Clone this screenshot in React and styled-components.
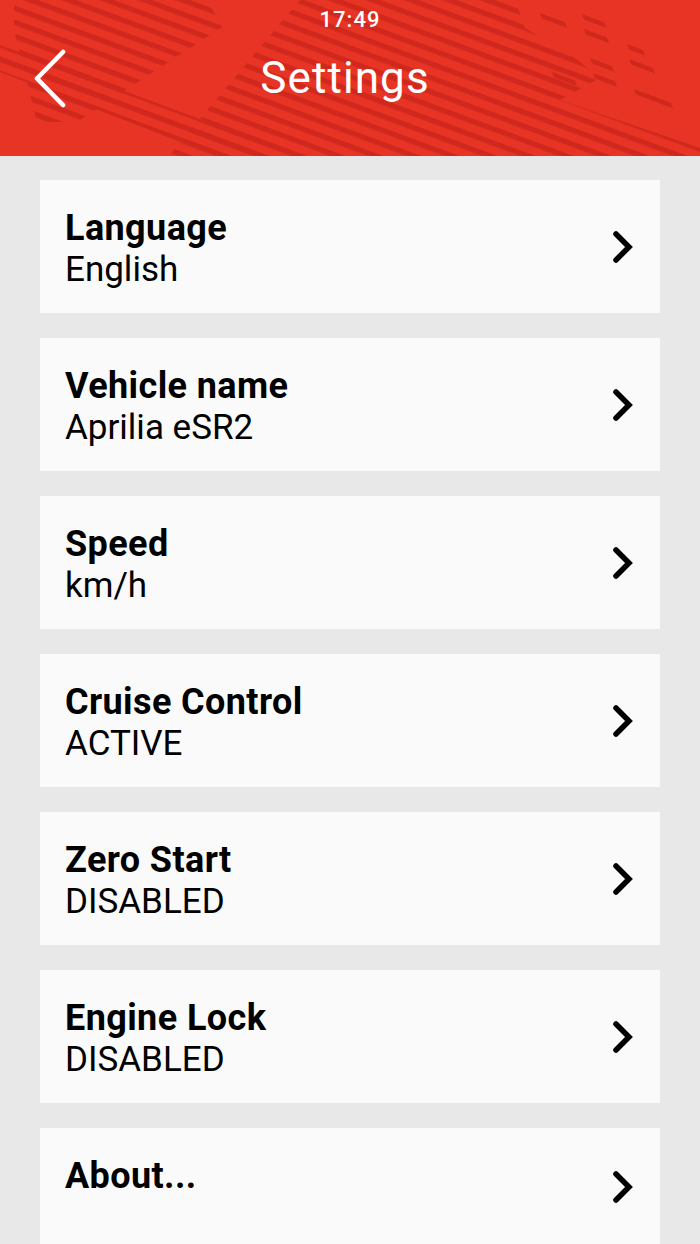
import React from "react";
import styled, { createGlobalStyle } from "styled-components";

const GlobalStyle = createGlobalStyle`
  html, body { margin: 0; padding: 0; background: #e8e8e8; }
  body { font-family: Roboto, "Noto Sans", "Liberation Sans", sans-serif; }
  * { box-sizing: border-box; }
`;

const Page = styled.div`
  width: 700px;
  min-height: 1244px;
  background: #e8e8e8;
  display: flex;
  flex-direction: column;
`;

const Header = styled.header`
  position: relative;
  height: 156px;
  background: #e83424;
  overflow: hidden;
  display: flex;
  flex-direction: column;
`;

const Stripes = styled.svg`
  position: absolute;
  inset: 0;
  width: 700px;
  height: 156px;
  pointer-events: none;
`;

const StatusBar = styled.div`
  position: relative;
  height: 38px;
  display: flex;
  align-items: center;
  justify-content: center;
  color: #fff;
  font-size: 22px;
  font-weight: 500;
  letter-spacing: 1px;
`;

const NavBar = styled.div`
  position: relative;
  height: 80px;
  display: grid;
  grid-template-columns: 100px 1fr 110px;
  align-items: center;
`;

const BackButton = styled.button`
  border: 0;
  background: none;
  padding: 0 0 0 30px;
  margin: 0;
  display: flex;
  align-items: center;
  cursor: pointer;
`;

const Title = styled.h1`
  margin: 0;
  text-align: center;
  color: #fff;
  font-size: 44px;
  font-weight: 400;
  line-height: 56px;
  letter-spacing: 1.1px;
`;

const List = styled.main`
  display: flex;
  flex-direction: column;
  gap: 25px;
  padding: 24px 40px 0 40px;
`;

const Card = styled.div`
  background: #fafafa;
  display: flex;
  align-items: center;
  justify-content: space-between;
  min-height: ${(p) => (p.$compact ? "118px" : "133px")};
  padding: 0 23px 0 25px;
`;

const TextBlock = styled.div`
  align-self: flex-start;
  padding: 27px 0 22px 0;
  display: flex;
  flex-direction: column;
`;

const Label = styled.div`
  font-size: 36px;
  font-weight: 700;
  line-height: 42px;
  letter-spacing: 0.4px;
  color: #000;
`;

const Value = styled.div`
  font-size: 35px;
  font-weight: 400;
  line-height: 42px;
  color: #000;
`;

const stripeRegions = [
  "14,0 207,0 222,27 77,122 37,122 14,30",
  "0,45 330,167 330,200 0,72",
  "300,0 515,0 525,28 575,58 600,78 560,100 700,148 700,157 168,157",
];

const dashes = [
  [540, 13, 565],
  [552, 72, 575],
  [582, 14, 604],
  [584, 29, 607],
  [590, 58, 612],
  [593, 73, 615],
  [627, 44, 643],
  [629, 59, 653],
  [634, 89, 671],
];

const S = 0.37;
const dashPoints = ([x1, y1, x2]) => {
  const y2 = y1 + S * (x2 - x1);
  return `${x1},${y1} ${x2},${y2} ${x2 + 2},${y2 + 5.5} ${x1 + 2},${y1 + 5.5}`;
};

const Chevron = () => (
  <svg width="26" height="36" viewBox="0 0 26 36">
    <path
      d="M5 5 L18 18 L5 31"
      fill="none"
      stroke="#000"
      strokeWidth="5.5"
      strokeLinecap="round"
      strokeLinejoin="miter"
    />
  </svg>
);

const BackIcon = () => (
  <svg width="36" height="60" viewBox="0 0 36 60">
    <path
      d="M33 4 L7 30.5 L33 57"
      fill="none"
      stroke="#fff"
      strokeWidth="4.6"
      strokeLinecap="round"
      strokeLinejoin="round"
    />
  </svg>
);

const items = [
  { label: "Language", value: "English" },
  { label: "Vehicle name", value: "Aprilia eSR2" },
  { label: "Speed", value: "km/h" },
  { label: "Cruise Control", value: "ACTIVE" },
  { label: "Zero Start", value: "DISABLED" },
  { label: "Engine Lock", value: "DISABLED" },
  { label: "About...", value: null },
];

export default function App() {
  return (
    <Page>
      <GlobalStyle />
      <Header>
        <Stripes viewBox="0 0 700 156">
          <defs>
            <pattern
              id="stripes"
              patternUnits="userSpaceOnUse"
              width="40"
              height="13.2"
              patternTransform="rotate(20.3)"
            >
              <rect x="0" y="0" width="40" height="5.3" fill="#d1281d" />
            </pattern>
          </defs>
          {stripeRegions.map((pts, i) => (
            <polygon key={i} points={pts} fill="url(#stripes)" />
          ))}
          {dashes.map((d, i) => (
            <polygon key={"d" + i} points={dashPoints(d)} fill="#d1281d" />
          ))}
        </Stripes>
        <StatusBar>17:49</StatusBar>
        <NavBar>
          <BackButton aria-label="Back">
            <BackIcon />
          </BackButton>
          <Title>Settings</Title>
          <span />
        </NavBar>
      </Header>
      <List>
        {items.map((it) => (
          <Card key={it.label} $compact={!it.value}>
            <TextBlock>
              <Label>{it.label}</Label>
              {it.value && <Value>{it.value}</Value>}
            </TextBlock>
            <Chevron />
          </Card>
        ))}
      </List>
    </Page>
  );
}
